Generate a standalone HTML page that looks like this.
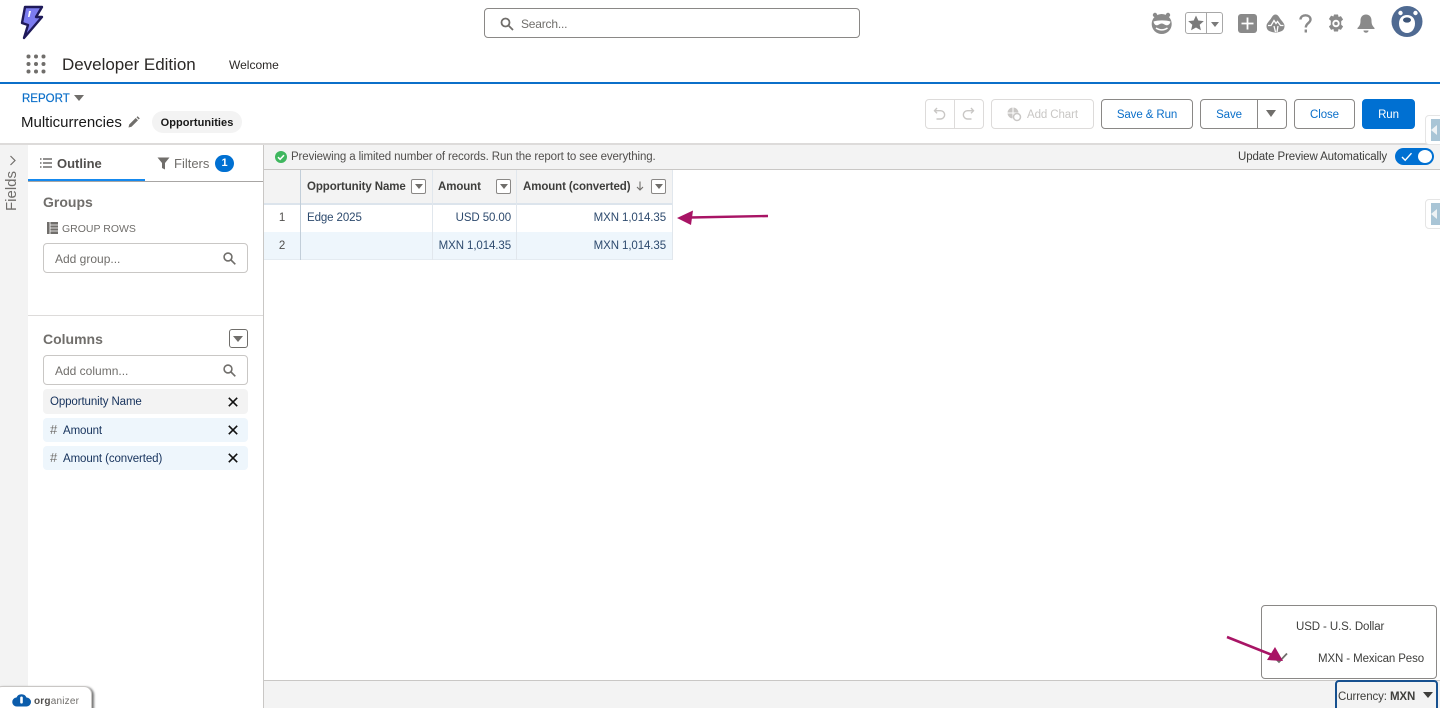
<!DOCTYPE html>
<html lang="en"><head><meta charset="utf-8"><title>Multicurrencies</title>
<style>
*{box-sizing:border-box}
html,body{margin:0;padding:0;width:1440px;height:708px;overflow:hidden;background:#fff;font-family:"Liberation Sans",sans-serif;color:#3e3e3c}
#p{position:relative;width:1440px;height:708px;overflow:hidden;background:#fff}
.a{position:absolute;white-space:nowrap}
svg{position:absolute;display:block;overflow:visible}
.btn{position:absolute;top:99px;height:30px;border:1px solid #8a8886;border-radius:4px;background:#fff;color:#0b6fc9;font-size:11.5px;letter-spacing:-.1px;line-height:30px;text-align:center}
.dis{border-color:#dddbda;color:#c9c7c5}
.ddbtn{position:absolute;width:15px;height:15px;border:1px solid #8a8886;border-radius:2px;background:#fff}
.ddbtn:after{content:"";position:absolute;left:3px;top:4px;border:4px solid transparent;border-top:5px solid #706e6b;border-bottom:0}
.inp{position:absolute;left:43px;width:205px;height:30px;border:1px solid #c9c7c5;border-radius:4px;background:#fff;color:#706e6b;font-size:12px;line-height:30px;padding-left:11px}
.chip{position:absolute;left:43px;width:205px;height:25px;border-radius:4px;font-size:11.5px;letter-spacing:-.1px;line-height:27px;color:#16325c}
.cell{position:absolute;font-size:11.5px;letter-spacing:-.1px;line-height:16px;color:#16325c;white-space:nowrap}
.hd{position:absolute;font-size:11.5px;line-height:16px;font-weight:bold;color:#3e3e3c;white-space:nowrap;letter-spacing:-.1px}
.s{font-size:11.5px;letter-spacing:-.11px;line-height:16px}
</style></head><body><div id="p">

<!-- logo -->
<svg style="left:20px;top:5px" width="24" height="35" viewBox="0 0 24 35"><path d="M5 2 L22 2 L16 12 L22 12 L4 33 L8 20 L2 18 Z" fill="#7c7cf0" stroke="#1f1a5a" stroke-width="2.400" stroke-linejoin="round"/><path d="M9 6 L11 6 L9.500 12 L8 12 Z" fill="#fff"/></svg>

<!-- search -->
<div class="a" style="left:484px;top:8px;width:376px;height:30px;border:1px solid #8a8886;border-radius:4px"></div>
<svg style="left:500px;top:17px" width="14" height="14" viewBox="0 0 14 14" fill="none" stroke="#706e6b" stroke-width="1.800"><circle cx="5.500" cy="5.500" r="4"/><path d="M8.500 8.500L13 13"/></svg>
<div class="a" style="left:521px;top:16px;font-size:12px;letter-spacing:-.2px;line-height:16px;color:#706e6b">Search...</div>

<!-- header icons -->
<svg style="left:1150px;top:12px" width="24" height="22" viewBox="0 0 24 22"><circle cx="5" cy="3" r="2.200" fill="#8a8a8a"/><circle cx="18" cy="3" r="2.200" fill="#8a8a8a"/><circle cx="11.700" cy="12" r="10" fill="#8a8a8a"/><path d="M3.500 9.500c5-1.500 12-1.500 17 0-.5 3-3 4.500-5 3.500-1.500-.7-2.500-1.500-3.800-1.500S9.500 12.300 8 13c-2 1-4-.5-4.500-3.500z" fill="#fff"/><path d="M6 16c3.500 2.500 8 2.500 11.500 0" stroke="#fff" stroke-width="1.500" fill="none"/></svg>
<div class="a" style="left:1185px;top:12px;width:38px;height:22px;border:1px solid #a8a8a8;border-radius:3px"></div>
<div class="a" style="left:1206px;top:12px;width:1px;height:22px;background:#a8a8a8"></div>
<svg style="left:1188px;top:15px" width="16" height="16" viewBox="0 0 16 16"><path d="M8 .5l2.300 5 5.500.6-4.100 3.700 1.200 5.500L8 12.500l-4.900 2.800 1.200-5.500L.2 6.100l5.500-.6z" fill="#7a7a7a"/></svg>
<div class="a" style="left:1211px;top:22px;border:4.500px solid transparent;border-top:5px solid #7a7a7a;border-bottom:0"></div>
<svg style="left:1238px;top:14px" width="19" height="19" viewBox="0 0 19 19"><rect width="19" height="19" rx="3" fill="#8a8a8a"/><path d="M9.500 3.500v12M3.500 9.500h12" stroke="#fff" stroke-width="1.800"/></svg>
<svg style="left:1266px;top:14px" width="19" height="19" viewBox="0 0 19 19"><path d="M9.500 0.500c2 0 3 1.500 4.500 4s4.500 4.500 4.500 7.500c0 3.500-2 5-4 5.500-2 .7-3.500 1-5 1s-3-.3-5-1c-2-.5-4-2-4-5.500C.5 9 3.500 7 5 4.500S7.500.5 9.500.5z" fill="#8a8a8a"/><path d="M2 11.500h3l3-5 2 3 1.500-2 3 4h3M8 12l1.500 6M12 12l-1 6" stroke="#fff" stroke-width="1.300" fill="none"/></svg>
<svg style="left:1299px;top:14px" width="14" height="19" viewBox="0 0 14 19" fill="none" stroke="#8a8a8a" stroke-width="2.400"><path d="M1.500 5.500C1.500 2.800 3.800 1.300 6.500 1.300s5 1.500 5 4.200c0 3.500-4.700 3.700-4.700 8"/><path d="M6.800 15.500v3"/></svg>
<svg style="left:1327px;top:14px" width="18" height="19" viewBox="0 0 18 19"><path d="M7 .5h4l.6 2.500 2.300-.9 2.200 3.400-1.900 1.700v3.600l1.900 1.700-2.200 3.400-2.300-.9-.6 2.500H7l-.6-2.500-2.300.9-2.200-3.400 1.900-1.700V6.700L1.900 5l2.200-3.400 2.300.9z" fill="#8a8a8a"/><circle cx="9" cy="9.500" r="3.700" fill="#fff"/><circle cx="9" cy="9.500" r="1.800" fill="#8a8a8a"/></svg>
<svg style="left:1357px;top:14px" width="18" height="19" viewBox="0 0 18 19"><path d="M9 .5c3.500 0 5.500 2.500 5.500 6 0 4 1 5.500 3 7.500v1H.5v-1c2-2 3-3.500 3-7.500 0-3.500 2-6 5.500-6z" fill="#8a8a8a"/><path d="M6.500 16.500h5c0 1.500-1.200 2.200-2.500 2.200s-2.500-.7-2.500-2.200z" fill="#8a8a8a"/></svg>
<svg style="left:1391px;top:5px" width="32" height="32" viewBox="0 0 32 32"><circle cx="16" cy="16.500" r="15.500" fill="#4f6a92"/><circle cx="9.500" cy="8" r="2.200" fill="#fff"/><circle cx="24.500" cy="8" r="2.200" fill="#fff"/><path d="M16 10c5 0 8 3.500 8 8.500 0 5.500-3.500 9.500-8 9.500s-8-4-8-9.500C8 13.500 11 10 16 10z" fill="#fff"/><ellipse cx="16" cy="15" rx="4" ry="2.600" fill="#3d5578"/></svg>

<!-- nav -->
<svg style="left:26px;top:54px" width="20" height="20" viewBox="0 0 20 20" fill="#706e6b"><circle cx="2.500" cy="2.500" r="2"/><circle cx="10" cy="2.500" r="2"/><circle cx="17.500" cy="2.500" r="2"/><circle cx="2.500" cy="10" r="2"/><circle cx="10" cy="10" r="2"/><circle cx="17.500" cy="10" r="2"/><circle cx="2.500" cy="17.500" r="2"/><circle cx="10" cy="17.500" r="2"/><circle cx="17.500" cy="17.500" r="2"/></svg>
<div class="a" style="left:62px;top:54px;font-size:17px;line-height:22px;color:#2b2826;letter-spacing:-.03px">Developer Edition</div>
<div class="a" style="left:229px;top:57px;font-size:12px;line-height:16px;color:#2b2826">Welcome</div>
<div class="a" style="left:0;top:82px;width:1440px;height:2px;background:#0b6fc9"></div>

<!-- report header -->
<div class="a" style="left:22px;top:92px;font-size:11.5px;line-height:14px;color:#0b6fc9;-webkit-text-stroke:.2px #0b6fc9">REPORT</div>
<div class="a" style="left:74px;top:95px;border:5px solid transparent;border-top:6px solid #706e6b;border-bottom:0"></div>
<div class="a" style="left:21px;top:113px;font-size:15px;line-height:20px;color:#181818">Multicurrencies</div>
<svg style="left:128px;top:116px" width="12" height="12" viewBox="0 0 12 12"><path d="M0.500 11.500l.7-3 6.500-6.500 2.300 2.300-6.500 6.500zM8.500 1.200L9.600.2 11.800 2.400l-1.100 1.100z" fill="#706e6b"/></svg>
<div class="a" style="left:152px;top:111px;width:90px;height:22px;border-radius:11px;background:#f3f3f3;text-align:center;font-size:11px;line-height:24px;font-weight:bold;color:#181818;letter-spacing:.05px">Opportunities</div>

<!-- toolbar buttons -->
<div class="btn dis" style="left:925px;width:59px"></div>
<div class="a" style="left:954px;top:99px;width:1px;height:30px;background:#dddbda"></div>
<svg style="left:933px;top:107px" width="14" height="14" viewBox="0 0 14 14" fill="none" stroke="#c9c7c5" stroke-width="1.400"><path d="M4 1L1.500 3.700 4 6.300M2 3.700h5.500a4 4 0 0 1 0 8.300H3.500"/></svg>
<svg style="left:961px;top:107px" width="14" height="14" viewBox="0 0 14 14" fill="none" stroke="#c9c7c5" stroke-width="1.400"><path d="M10 1l2.500 2.700L10 6.300M12 3.700H6.500a4 4 0 0 0 0 8.300h4"/></svg>
<div class="btn dis" style="left:991px;width:103px;padding-left:20px">Add Chart</div>
<svg style="left:1007px;top:107px" width="14" height="14" viewBox="0 0 14 14"><circle cx="6" cy="6" r="5.500" fill="#c9c7c5"/><path d="M6 0v12M0 6h12" stroke="#fff"/><circle cx="10" cy="10" r="3.500" fill="#fff" stroke="#c9c7c5" stroke-width="1.500"/></svg>
<div class="btn" style="left:1101px;width:92px">Save &amp; Run</div>
<div class="btn" style="left:1200px;width:87px;padding-right:29px">Save</div>
<div class="a" style="left:1257px;top:99px;width:1px;height:30px;background:#8a8886"></div>
<div class="a" style="left:1266px;top:110px;border:5.500px solid transparent;border-top:7px solid #706e6b;border-bottom:0"></div>
<div class="btn" style="left:1294px;width:61px">Close</div>
<div class="btn" style="left:1362px;width:53px;background:#0070d2;border-color:#0070d2;color:#fff">Run</div>

<!-- page lower bg -->
<div class="a" style="left:0;top:143px;width:1440px;height:2px;background:#dddbda"></div>
<div class="a" style="left:0;top:145px;width:28px;height:563px;background:#f3f3f3"></div>
<svg style="left:9px;top:155px" width="8" height="11" viewBox="0 0 8 11" fill="none" stroke="#706e6b" stroke-width="1.200"><path d="M1.500 1l4.500 4.500L1.500 10"/></svg>
<div class="a" style="left:-9px;top:183px;width:42px;height:16px;transform:rotate(-90deg);text-align:center;font-size:15px;line-height:16px;color:#706e6b">Fields</div>

<!-- sidebar -->
<div class="a" style="left:28px;top:145px;width:235px;height:563px;background:#fff"></div>
<div class="a" style="left:263px;top:145px;width:1px;height:563px;background:#c9c7c5"></div>
<div class="a" style="left:28px;top:181px;width:235px;height:1px;background:#a8a6a4"></div>
<div class="a" style="left:28px;top:179px;width:117px;height:2px;background:#1589ee"></div>
<svg style="left:40px;top:158px" width="12" height="10" viewBox="0 0 12 10" stroke="#514f4d" stroke-width="1.200"><path d="M3 1h9M3 5h9M3 9h9M0 1h1.500M0 5h1.500M0 9h1.500"/></svg>
<div class="a" style="left:57px;top:156px;font-size:13px;line-height:16px;font-weight:bold;color:#514f4d">Outline</div>
<svg style="left:157px;top:157px" width="13" height="13" viewBox="0 0 13 13"><path d="M.5.500h12L8 6v6.500L5 11V6z" fill="#706e6b"/></svg>
<div class="a" style="left:174px;top:156px;font-size:13px;line-height:16px;color:#706e6b">Filters</div>
<div class="a" style="left:215px;top:155px;width:19px;height:17px;border-radius:9px;background:#0070d2;color:#fff;font-size:11px;line-height:17px;text-align:center;font-weight:bold">1</div>

<div class="a" style="left:43px;top:194px;font-size:14px;line-height:16px;font-weight:bold;color:#706e6b">Groups</div>
<svg style="left:47px;top:222px" width="11" height="12" viewBox="0 0 11 12"><rect width="11" height="12" fill="#706e6b"/><path d="M3 0v12M3 3h8M3 6h8M3 9h8" stroke="#fff" stroke-width=".8"/></svg>
<div class="a" style="left:62px;top:222px;font-size:10.5px;line-height:15px;color:#706e6b">GROUP ROWS</div>
<div class="inp" style="top:243px">Add group...</div>
<svg style="left:223px;top:252px" width="13" height="13" viewBox="0 0 13 13" fill="none" stroke="#706e6b" stroke-width="1.600"><circle cx="5" cy="5" r="3.900"/><path d="M8 8l4.300 4.300"/></svg>
<div class="a" style="left:28px;top:315px;width:235px;height:1px;background:#dddbda"></div>

<div class="a" style="left:43px;top:331px;font-size:14px;line-height:16px;font-weight:bold;color:#706e6b">Columns</div>
<div class="a" style="left:229px;top:329px;width:19px;height:19px;border:1px solid #706e6b;border-radius:3px"></div>
<div class="a" style="left:233px;top:336px;border:5px solid transparent;border-top:6px solid #706e6b;border-bottom:0"></div>
<div class="inp" style="top:355px">Add column...</div>
<svg style="left:223px;top:364px" width="13" height="13" viewBox="0 0 13 13" fill="none" stroke="#706e6b" stroke-width="1.600"><circle cx="5" cy="5" r="3.900"/><path d="M8 8l4.300 4.300"/></svg>

<div class="chip" style="top:389px;background:#f3f3f3;padding-left:7px">Opportunity Name</div>
<div class="chip" style="top:418px;height:24px;line-height:26px;background:#eef6fc;padding-left:20px">Amount</div>
<div class="chip" style="top:446px;height:24px;line-height:26px;background:#eef6fc;padding-left:20px">Amount (converted)</div>
<div class="a" style="left:50px;top:422px;font-size:13px;line-height:16px;color:#706e6b">#</div>
<div class="a" style="left:50px;top:450px;font-size:13px;line-height:16px;color:#706e6b">#</div>
<svg style="left:228px;top:397px" width="10" height="10" viewBox="0 0 10 10" stroke="#111" stroke-width="1.600"><path d="M.8.800l8.400 8.400M9.200.800L.8 9.200"/></svg>
<svg style="left:228px;top:425px" width="10" height="10" viewBox="0 0 10 10" stroke="#111" stroke-width="1.600"><path d="M.8.800l8.400 8.400M9.200.800L.8 9.200"/></svg>
<svg style="left:228px;top:453px" width="10" height="10" viewBox="0 0 10 10" stroke="#111" stroke-width="1.600"><path d="M.8.800l8.400 8.400M9.200.800L.8 9.200"/></svg>

<!-- preview bar -->
<div class="a" style="left:264px;top:145px;width:1176px;height:24px;background:#f3f3f3"></div>
<div class="a" style="left:264px;top:169px;width:1176px;height:1px;background:#c9c7c5"></div>
<svg style="left:275px;top:151px" width="12" height="12" viewBox="0 0 12 12"><circle cx="6" cy="6" r="6" fill="#3fb75f"/><path d="M3 6.200l2.100 2.100L9 4.200" stroke="#fff" stroke-width="1.500" fill="none"/></svg>
<div class="a s" style="left:291px;top:149px;color:#514f4d">Previewing a limited number of records. Run the report to see everything.</div>
<div class="a s" style="left:1238px;top:149px;color:#3e3e3c">Update Preview Automatically</div>
<div class="a" style="left:1395px;top:148px;width:39px;height:17px;border-radius:9px;background:#0070d2"></div>
<div class="a" style="left:1418px;top:150px;width:14px;height:13px;border-radius:50%;background:#fff"></div>
<svg style="left:1401px;top:152px" width="12" height="10" viewBox="0 0 12 10" fill="none" stroke="#fff" stroke-width="1.400"><path d="M1 5l3.200 3.200L10.500 1.200"/></svg>

<!-- side tabs right -->
<div class="a" style="left:1425px;top:115px;width:20px;height:30px;border:1px solid #e5e5e5;border-radius:4px 0 0 4px;background:#fff"></div>
<div class="a" style="left:1431px;top:119px;width:9px;height:22px;background:#a9c5d6"></div>
<div class="a" style="left:1431px;top:125px;border:5px solid transparent;border-right:6px solid #eef2f5;border-left:0"></div>
<div class="a" style="left:1425px;top:199px;width:20px;height:30px;border:1px solid #e5e5e5;border-radius:4px 0 0 4px;background:#fff"></div>
<div class="a" style="left:1431px;top:203px;width:9px;height:22px;background:#a9c5d6"></div>
<div class="a" style="left:1431px;top:209px;border:5px solid transparent;border-right:6px solid #eef2f5;border-left:0"></div>

<!-- table -->
<div class="a" style="left:264px;top:170px;width:408px;height:33px;background:#f3f3f3"></div>
<div class="a" style="left:264px;top:203px;width:409px;height:2px;background:#dce4ec"></div>
<div class="a" style="left:264px;top:232px;width:409px;height:27px;background:#eef6fc"></div>
<div class="a" style="left:264px;top:259px;width:409px;height:1px;background:#e4ebf1"></div>
<div class="a" style="left:300px;top:170px;width:1px;height:90px;background:#c2ced9"></div>
<div class="a" style="left:432px;top:170px;width:1px;height:90px;background:#e1e7ed"></div>
<div class="a" style="left:516px;top:170px;width:1px;height:90px;background:#e1e7ed"></div>
<div class="a" style="left:672px;top:170px;width:1px;height:90px;background:#e1e7ed"></div>

<div class="hd" style="left:307px;top:179px">Opportunity Name</div>
<div class="ddbtn" style="left:411px;top:179px"></div>
<div class="hd" style="left:438px;top:179px">Amount</div>
<div class="ddbtn" style="left:496px;top:179px"></div>
<div class="hd" style="left:523px;top:179px">Amount (converted)</div>
<svg style="left:636px;top:181px" width="8" height="10" viewBox="0 0 8 10" fill="none" stroke="#706e6b" stroke-width="1.100"><path d="M4 .5v8.500M1 6l3 3 3-3"/></svg>
<div class="ddbtn" style="left:651px;top:179px"></div>

<div class="cell" style="left:264px;top:210px;width:36px;text-align:center;color:#514f4d">1</div>
<div class="cell" style="left:307px;top:210px;color:#2d4a6e">Edge 2025</div>
<div class="cell" style="left:433px;top:210px;width:78px;text-align:right;color:#2d4a6e">USD 50.00</div>
<div class="cell" style="left:517px;top:210px;width:149px;text-align:right;color:#2d4a6e">MXN 1,014.35</div>
<div class="cell" style="left:264px;top:238px;width:36px;text-align:center;color:#514f4d">2</div>
<div class="cell" style="left:433px;top:238px;width:78px;text-align:right;color:#2d4a6e">MXN 1,014.35</div>
<div class="cell" style="left:517px;top:238px;width:149px;text-align:right;color:#2d4a6e">MXN 1,014.35</div>

<!-- arrow 1 -->
<svg style="left:676px;top:208px" width="94" height="20" viewBox="0 0 94 20"><path d="M14 9.500L92 8" stroke="#a81465" stroke-width="2.400"/><path d="M1 10L17 2.500 15 17z" fill="#a81465"/></svg>

<!-- bottom bar -->
<div class="a" style="left:264px;top:680px;width:1176px;height:28px;background:#f3f3f3;border-top:1px solid #c9c7c5"></div>

<!-- currency menu -->
<div class="a" style="left:1261px;top:605px;width:176px;height:74px;background:#fff;border:1px solid #8a8886;border-radius:4px"></div>
<div class="a s" style="left:1296px;top:619px;color:#3e3e3c">USD - U.S. Dollar</div>
<div class="a s" style="left:1318px;top:651px;color:#3e3e3c">MXN - Mexican Peso</div>
<svg style="left:1274px;top:652px" width="14" height="12" viewBox="0 0 14 12" fill="none" stroke="#706e6b" stroke-width="1.800"><path d="M1 6l4 4 8-8.500"/></svg>
<svg style="left:1225px;top:635px" width="62" height="30" viewBox="0 0 62 30"><path d="M2 2L46 19.500" stroke="#a81465" stroke-width="2.600"/><path d="M58 26L42 25 50 12z" fill="#a81465"/></svg>

<!-- currency tab -->
<div class="a" style="left:1335px;top:680px;width:103px;height:32px;border:2px solid #16508f;border-radius:4px;background:#f3f3f3"></div>
<div class="a s" style="left:1338px;top:689px;color:#3e3e3c">Currency: <b>MXN</b></div>
<div class="a" style="left:1423px;top:692px;border:5px solid transparent;border-top:6px solid #3e3e3c;border-bottom:0"></div>

<!-- organizer -->
<div class="a" style="left:-6px;top:686px;width:98px;height:30px;background:#fff;border:1px solid #c9c7c5;border-radius:8px;box-shadow:2px 1px 2px #777"></div>
<svg style="left:12px;top:693px" width="19" height="15" viewBox="0 0 19 15"><path d="M5 13.500a4.500 4.500 0 0 1-.5-9A5.500 5.500 0 0 1 14.500 4.500a4.500 4.500 0 0 1 0 9z" fill="#0b5cab"/><rect x="8.200" y="3.500" width="2.600" height="7" rx="1.300" fill="#fff"/></svg>
<div class="a" style="left:34px;top:695px;font-size:10px;line-height:14px;color:#706e6b;letter-spacing:.2px"><b style="color:#514f4d">org</b>anizer</div>

</div></body></html>
